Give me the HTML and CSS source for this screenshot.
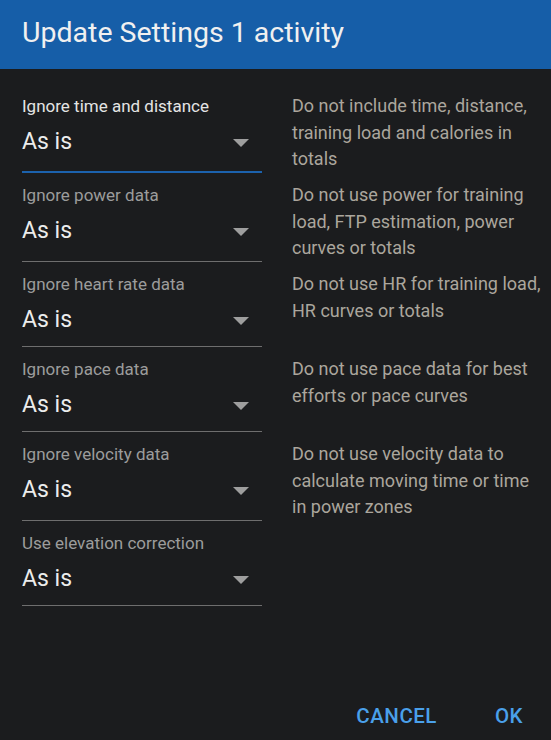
FILE: index.html
```html
<!DOCTYPE html>
<html>
<head>
<meta charset="utf-8">
<link rel="stylesheet" href="styles.css">
</head>
<body>
<div class="dialog">
  <header class="title">Update Settings 1 activity</header>
  <div class="content">
    <div class="row">
      <div class="field focused">
        <div class="label">Ignore time and distance</div>
        <div class="select"><span class="value">As is</span><svg class="arrow" width="16" height="8" viewBox="0 0 16 8"><polygon points="0,0 16,0 8,8"/></svg></div>
      </div>
      <div class="desc">Do not include time, distance, training load and calories in totals</div>
    </div>
    <div class="row">
      <div class="field">
        <div class="label">Ignore power data</div>
        <div class="select"><span class="value">As is</span><svg class="arrow" width="16" height="8" viewBox="0 0 16 8"><polygon points="0,0 16,0 8,8"/></svg></div>
      </div>
      <div class="desc">Do not use power for training load, FTP estimation, power curves or totals</div>
    </div>
    <div class="row">
      <div class="field">
        <div class="label">Ignore heart rate data</div>
        <div class="select"><span class="value">As is</span><svg class="arrow" width="16" height="8" viewBox="0 0 16 8"><polygon points="0,0 16,0 8,8"/></svg></div>
      </div>
      <div class="desc">Do not use HR for training load, HR curves or totals</div>
    </div>
    <div class="row">
      <div class="field">
        <div class="label">Ignore pace data</div>
        <div class="select"><span class="value">As is</span><svg class="arrow" width="16" height="8" viewBox="0 0 16 8"><polygon points="0,0 16,0 8,8"/></svg></div>
      </div>
      <div class="desc">Do not use pace data for best efforts or pace curves</div>
    </div>
    <div class="row">
      <div class="field">
        <div class="label">Ignore velocity data</div>
        <div class="select"><span class="value">As is</span><svg class="arrow" width="16" height="8" viewBox="0 0 16 8"><polygon points="0,0 16,0 8,8"/></svg></div>
      </div>
      <div class="desc">Do not use velocity data to calculate moving time or time in power zones</div>
    </div>
    <div class="row">
      <div class="field">
        <div class="label">Use elevation correction</div>
        <div class="select"><span class="value">As is</span><svg class="arrow" width="16" height="8" viewBox="0 0 16 8"><polygon points="0,0 16,0 8,8"/></svg></div>
      </div>
      <div class="desc"></div>
    </div>
  </div>
  <div class="actions">
    <button class="btn">CANCEL</button>
    <button class="btn">OK</button>
  </div>
</div>
</body>
</html>
```
FILE: styles.css
```css
html, body {
  margin: 0;
  padding: 0;
  background: #1b1c1e;
}
body {
  font-family: Roboto, "Liberation Sans", sans-serif;
}
.dialog {
  width: 551px;
  height: 740px;
  display: flex;
  flex-direction: column;
  background: #1b1c1e;
  overflow: hidden;
}
.title {
  height: 69px;
  box-sizing: border-box;
  background: #165ea8;
  color: #f0f0f0;
  font-size: 28.5px;
  font-weight: 400;
  line-height: 66px;
  padding: 0 22px;
  white-space: nowrap;
}
.content {
  padding: 24px 8px 0 22px;
  display: flex;
  flex-direction: column;
  gap: 9px;
}
.row {
  display: grid;
  grid-template-columns: 240px 251px;
  column-gap: 30px;
  align-items: stretch;
}
.field {
  display: flex;
  flex-direction: column;
}
.label {
  font-size: 17px;
  line-height: 27px;
  color: #9c9c9c;
  white-space: nowrap;
}
.focused .label {
  color: #e4e4e4;
}
.select {
  flex: 1;
  margin-top: 7px;
  display: flex;
  align-items: flex-start;
  justify-content: space-between;
  padding: 0 13px 11px 0;
  border-bottom: 1px solid #6e6e6e;
}
.focused .select {
  border-bottom: 2px solid #1c62ad;
}
.value {
  font-size: 23px;
  line-height: 30px;
  color: #ececec;
}
.arrow {
  fill: #9e9e9e;
  margin-top: 12px;
}
.desc {
  font-size: 18px;
  line-height: 26.67px;
  color: #aba69d;
}
.actions {
  margin-top: auto;
  display: flex;
  justify-content: flex-end;
  gap: 42px;
  padding: 0 20px 6px 0;
}
.btn {
  background: none;
  border: none;
  font-family: Roboto, "Liberation Sans", sans-serif;
  font-size: 20.5px;
  font-weight: 500;
  color: #4aa0ea;
  height: 36px;
  padding: 0 8px;
  letter-spacing: 0.5px;
}
```
